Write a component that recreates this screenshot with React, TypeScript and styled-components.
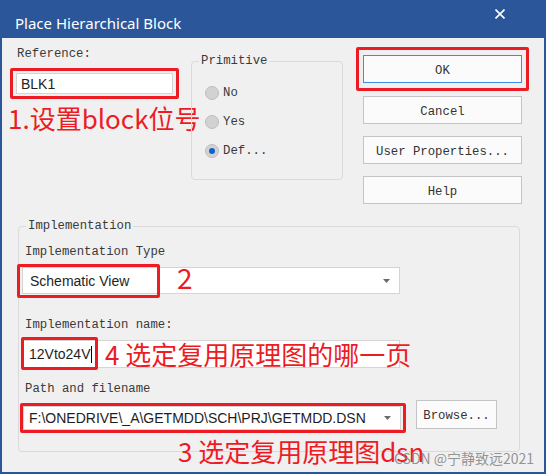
import * as React from 'react';
import styled, { createGlobalStyle } from 'styled-components';

const red = '#ed1c24';
const mono = `"Liberation Mono", "DejaVu Sans Mono", monospace`;
const sans = `"Liberation Sans", Arial, sans-serif`;
const cjk = `"Noto Sans CJK SC", "Noto Sans", sans-serif`;

const GlobalStyle = createGlobalStyle`
  html, body {
    margin: 0;
    padding: 0;
    background: #ffffff;
  }
`;

const Window = styled.div`
  position: relative;
  box-sizing: border-box;
  width: 546px;
  height: 474px;
  border: 2px solid #2b579a;
  border-top: none;
  background: #f0f0f0;
  display: flex;
  flex-direction: column;
`;

const TitleBar = styled.div`
  height: 38px;
  flex: none;
  background: #2b579a;
  display: flex;
  align-items: flex-start;
  padding: 13px 39px 0 13px;
  box-sizing: border-box;
  color: #ffffff;
  font-family: "Noto Sans", sans-serif;
  font-size: 15px;
  line-height: 20px;
`;

const CloseButton = styled.div`
  margin-left: auto;
  margin-top: -4px;
  width: 10px;
  height: 10px;
  display: flex;
`;

const Body = styled.div`
  flex: 1;
  display: flex;
  flex-direction: column;
`;

const TopRow = styled.div`
  display: flex;
  align-items: flex-start;
  margin-left: 8px;
`;

const LeftCol = styled.div`
  width: 169px;
  margin-top: 9px;
  display: flex;
  flex-direction: column;
`;

const Label = styled.div<{ $mt?: number; $pl?: number }>`
  font-family: ${mono};
  font-size: 12.3px;
  line-height: 14px;
  color: #3a3a3a;
  padding-left: ${p => p.$pl ?? 3}px;
  margin-top: ${p => p.$mt ?? 0}px;
  white-space: nowrap;
`;

const RedFrame = styled.div`
  box-sizing: border-box;
  border: 3px solid ${red};
  border-radius: 2px;
`;

const RefFrame = styled(RedFrame)`
  width: 169px;
  height: 31px;
  margin-top: 7px;
  padding: 2px 3px;
`;

const TextBox = styled.div<{ $w: number; $h: number; $pl: number }>`
  position: relative;
  box-sizing: border-box;
  width: ${p => p.$w}px;
  height: ${p => p.$h}px;
  background: #ffffff;
  border: 1px solid #d4d4d4;
  display: flex;
  align-items: center;
  padding-left: ${p => p.$pl}px;
  font-family: ${sans};
  font-size: 14px;
  color: #1e1e1e;
  white-space: nowrap;
`;

const Caret = styled.span`
  display: inline-block;
  width: 1px;
  height: 17px;
  background: #000000;
`;

const DropArrow = styled.svg`
  position: absolute;
  right: 9px;
  top: 50%;
  margin-top: -2px;
`;

const Note = styled.div<{ $size?: number }>`
  font-family: ${cjk};
  font-size: ${p => p.$size ?? 26}px;
  line-height: 30px;
  color: ${red};
  white-space: nowrap;
`;

const RefNote = styled(Note)`
  margin-top: 4px;
  margin-left: -2px;
`;

const Overlay = styled.div<{ $l: number; $t: number }>`
  position: absolute;
  left: ${p => p.$l}px;
  top: ${p => p.$t}px;
`;

const OverlayFrame = styled(RedFrame)<{ $l: number; $t: number; $w: number; $h: number }>`
  position: absolute;
  left: ${p => p.$l}px;
  top: ${p => p.$t}px;
  width: ${p => p.$w}px;
  height: ${p => p.$h}px;
`;

const Group = styled.fieldset<{ $w: number; $h: number; $pl: number }>`
  position: relative;
  box-sizing: border-box;
  margin: 0;
  min-width: 0;
  width: ${p => p.$w}px;
  height: ${p => p.$h}px;
  border: 1px solid #dadada;
  border-radius: 4px;
  padding: 0 0 0 ${p => p.$pl}px;
`;

const Legend = styled.legend<{ $ml: number }>`
  font-family: ${mono};
  font-size: 12.3px;
  line-height: 14px;
  color: #3a3a3a;
  padding: 0 2px;
  margin-left: ${p => p.$ml}px;
`;

const PrimitiveGroup = styled(Group)`
  margin-top: 16px;
  margin-left: 12px;
`;

const RadioList = styled.div`
  padding-top: 10px;
  display: flex;
  flex-direction: column;
`;

const RadioRow = styled.div`
  height: 29px;
  display: flex;
  align-items: center;
  gap: 4px;
  font-family: ${mono};
  font-size: 12.3px;
  color: #3a3a3a;
`;

const RadioDot = styled.span<{ $checked?: boolean }>`
  box-sizing: border-box;
  width: 14px;
  height: 14px;
  border-radius: 50%;
  background: #d2d2d2;
  border: 1px solid #bdbdbd;
  display: flex;
  align-items: center;
  justify-content: center;

  &::after {
    content: '';
    display: ${p => (p.$checked ? 'block' : 'none')};
    width: 6px;
    height: 6px;
    border-radius: 50%;
    background: #0f62d0;
  }
`;

const ButtonCol = styled.div`
  margin-top: 9px;
  margin-left: 13px;
  display: flex;
  flex-direction: column;
  gap: 12px;
`;

const OkFrame = styled(RedFrame)`
  width: 173px;
  height: 44px;
  padding: 5px 4px;
  margin-bottom: -7px;
`;

const Button = styled.div<{ $w: number; $h: number; $primary?: boolean }>`
  box-sizing: border-box;
  width: ${p => p.$w}px;
  height: ${p => p.$h}px;
  padding-top: 3px;
  background: #fbfbfb;
  border: 1px solid ${p => (p.$primary ? '#3d8ee0' : '#c4c4c4')};
  display: flex;
  align-items: center;
  justify-content: center;
  font-family: ${mono};
  font-size: 12.3px;
  color: #333333;
  white-space: nowrap;
`;

const SideButton = styled(Button)`
  margin-left: 7px;
`;

const ImplGroup = styled(Group)`
  margin-top: 15px;
  margin-left: 16px;
`;

const FieldBox = styled.div<{ $mt: number }>`
  position: relative;
  margin-top: ${p => p.$mt}px;
`;

const PathRow = styled.div`
  position: relative;
  margin-top: 4px;
  display: flex;
  align-items: flex-start;
`;

const PathFrame = styled(RedFrame)`
  width: 386px;
  height: 30px;
  margin-top: 3px;
  margin-left: -2px;
`;

const BrowseButton = styled(Button)`
  margin-left: 10px;
`;

const Watermark = styled.div`
  position: absolute;
  left: 392px;
  top: 449px;
  font-family: ${cjk};
  font-size: 14px;
  line-height: 18px;
  color: rgba(130, 130, 130, 0.85);
  white-space: nowrap;
`;

const Arrow = () => (
  <DropArrow width="7" height="4" viewBox="0 0 7 4">
    <polygon points="0,0 7,0 3.5,4" fill="#6a6a6a" />
  </DropArrow>
);

export default function App() {
  return (
    <>
      <GlobalStyle />
      <Window>
        <TitleBar>
          <span>Place Hierarchical Block</span>
          <CloseButton>
            <svg width="10" height="10" viewBox="0 0 10 10">
              <path d="M0.5 0.5 L9.5 9.5 M9.5 0.5 L0.5 9.5" stroke="#ffffff" strokeWidth="1.6" />
            </svg>
          </CloseButton>
        </TitleBar>
        <Body>
          <TopRow>
            <LeftCol>
              <Label $pl={7}>Reference:</Label>
              <RefFrame>
                <TextBox $w={157} $h={21} $pl={4}>BLK1</TextBox>
              </RefFrame>
              <RefNote>1.设置block位号</RefNote>
            </LeftCol>

            <PrimitiveGroup $w={152} $h={126} $pl={13}>
              <Legend $ml={-6}>Primitive</Legend>
              <RadioList>
                <RadioRow><RadioDot />No</RadioRow>
                <RadioRow><RadioDot />Yes</RadioRow>
                <RadioRow><RadioDot $checked />Def...</RadioRow>
              </RadioList>
            </PrimitiveGroup>

            <ButtonCol>
              <OkFrame>
                <Button $w={159} $h={28} $primary>OK</Button>
              </OkFrame>
              <SideButton $w={159} $h={28}>Cancel</SideButton>
              <SideButton $w={159} $h={28}>User Properties...</SideButton>
              <SideButton $w={159} $h={28}>Help</SideButton>
            </ButtonCol>
          </TopRow>

          <ImplGroup $w={502} $h={233} $pl={3}>
            <Legend $ml={4}>Implementation</Legend>
            <Label $mt={12}>Implementation Type</Label>
            <FieldBox $mt={8}>
              <TextBox $w={378} $h={27} $pl={7}>
                Schematic View
                <Arrow />
              </TextBox>
              <OverlayFrame $l={-5} $t={-3} $w={143} $h={34} />
              <Overlay $l={155} $t={-5}>
                <Note $size={28}>2</Note>
              </Overlay>
            </FieldBox>

            <Label $mt={24}>Implementation name:</Label>
            <FieldBox $mt={8}>
              <TextBox $w={378} $h={28} $pl={6}>
                12Vto24V<Caret />
              </TextBox>
              <OverlayFrame $l={-1} $t={-3} $w={77} $h={33} />
              <Overlay $l={83} $t={-1}>
                <Note>4 选定复用原理图的哪一页</Note>
              </Overlay>
            </FieldBox>

            <Label $mt={14}>Path and filename</Label>
            <PathRow>
              <PathFrame>
                <TextBox $w={378} $h={24} $pl={5}>
                  F:\ONEDRIVE\_A\GETMDD\SCH\PRJ\GETMDD.DSN
                  <Arrow />
                </TextBox>
              </PathFrame>
              <BrowseButton $w={81} $h={29}>Browse...</BrowseButton>
              <Overlay $l={156} $t={36}>
                <Note>3 选定复用原理图dsn</Note>
              </Overlay>
            </PathRow>
          </ImplGroup>
        </Body>
        <Watermark>CSDN @宁静致远2021</Watermark>
      </Window>
    </>
  );
}
